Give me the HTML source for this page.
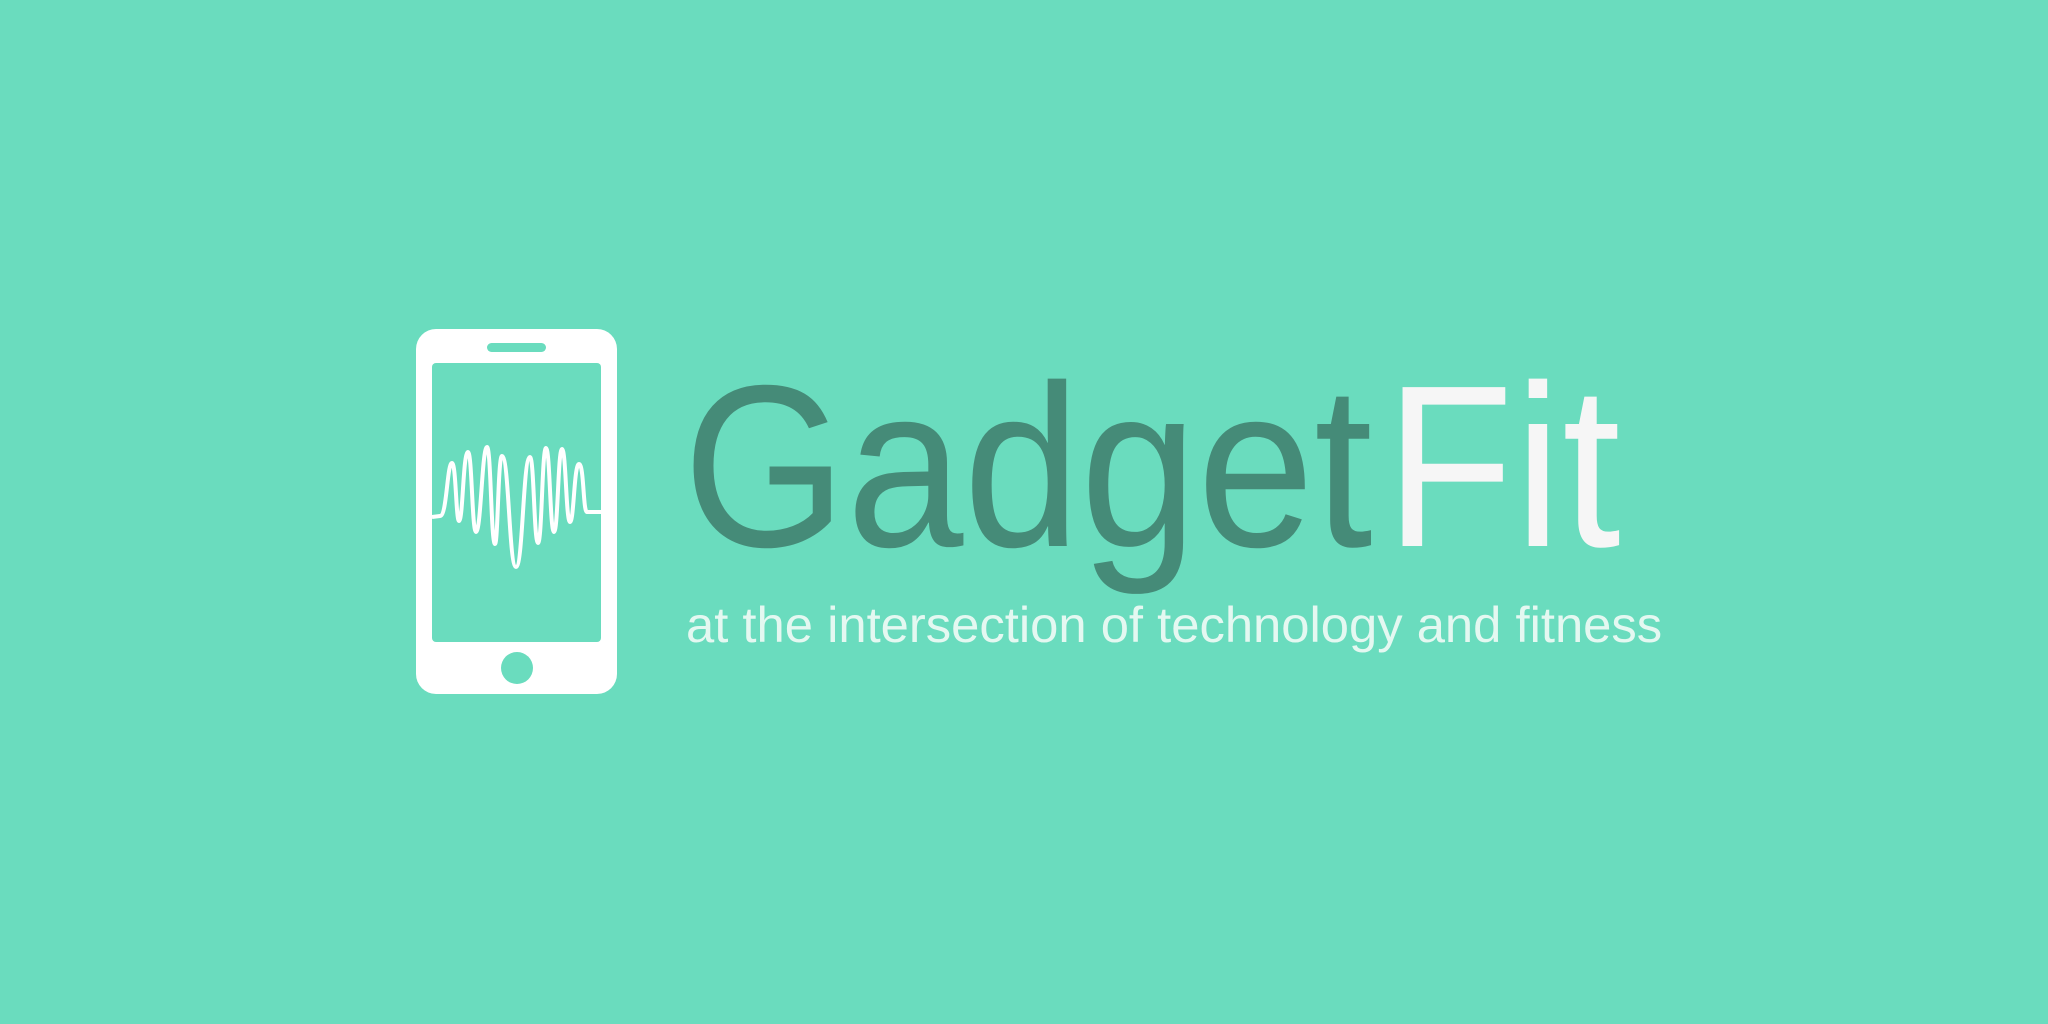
<!DOCTYPE html>
<html><head><meta charset="utf-8"><style>
html,body{margin:0;padding:0;width:2048px;height:1024px;overflow:hidden;background:#6adcbe;}
.t{position:absolute;font-family:"Liberation Sans",sans-serif;white-space:nowrap;transform-origin:0 0;}
#title{left:683px;top:336px;font-size:231px;line-height:260px;transform:scaleX(0.91);color:#458b78;}
#title span{color:#f6f6f6;margin-left:14px;letter-spacing:1px;}
#sub{left:686px;top:595px;font-size:50px;line-height:60px;color:#e4f8f1;transform:scaleX(1.015);}
</style></head><body>
<svg width="2048" height="1024" style="position:absolute;left:0;top:0">
<rect x="416" y="329" width="201" height="365" rx="20" fill="#fff"/>
<rect x="432" y="363" width="169" height="279" rx="4" fill="#6adcbe"/>
<rect x="487" y="343" width="59" height="9" rx="4.5" fill="#6adcbe"/>
<circle cx="517" cy="668" r="16" fill="#6adcbe"/>
<path d="M432 517 L440 516 C447 516 447 463 452 463 C456 463 456 521 459 521 C463 521 463 452 468 452 C472 452 472 532 476 532 C481 532 482 447 487 447 C491 447 491 544 495 544 C498 544 498 456 502 456 C509 456 509 567 516 567 C523 567 523 457 530 457 C534 457 534 543 538 543 C542 543 542 448 546 448 C550 448 550 532 554 532 C558 532 558 449 562 449 C566 449 566 522 570 522 C574 522 574 464 579 464 C584 464 583 512 587 512 L601 512" fill="none" stroke="#fff" stroke-width="4" stroke-linejoin="round"/>
</svg>
<div id="title" class="t">Gadget<span>Fit</span></div>
<div id="sub" class="t">at the intersection of technology and fitness</div>
</body></html>
